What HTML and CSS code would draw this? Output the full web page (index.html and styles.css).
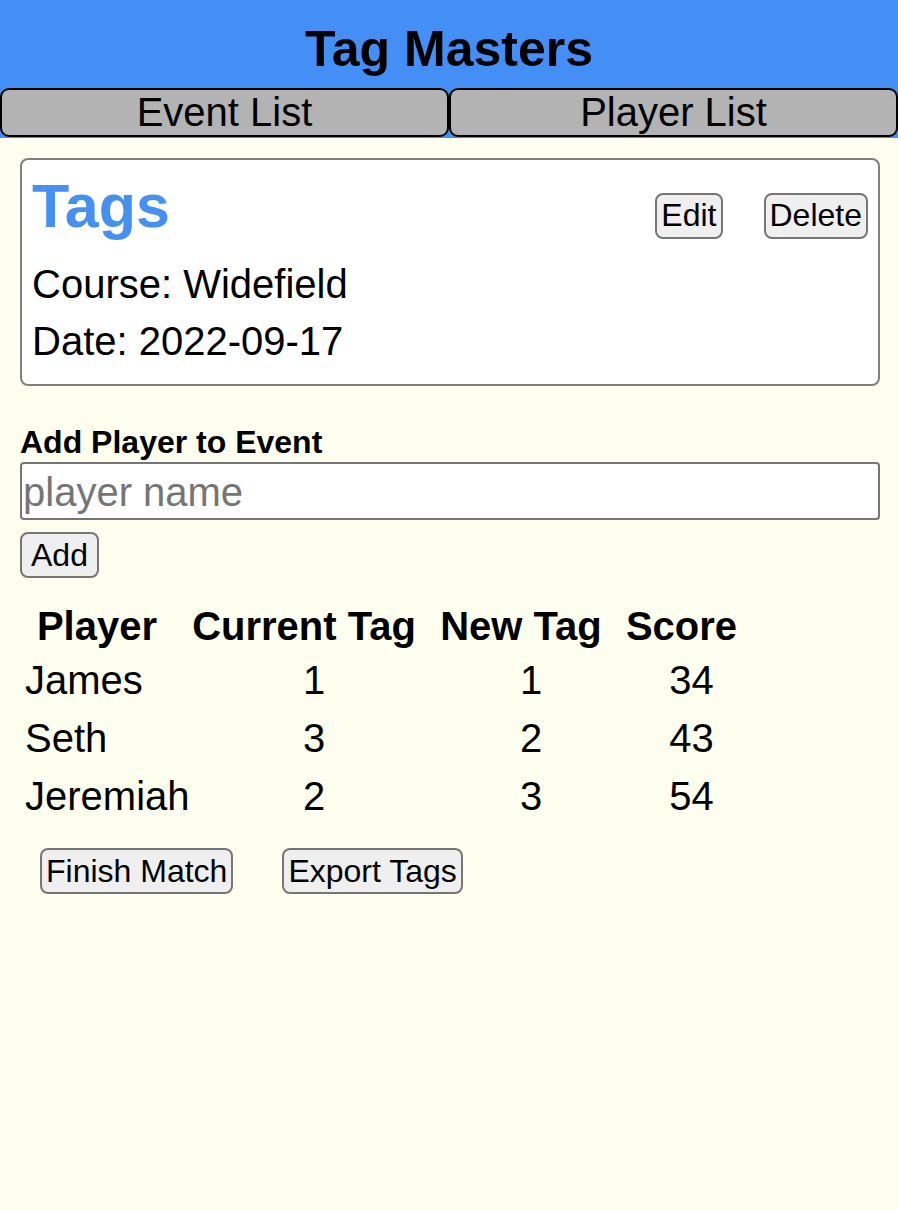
FILE: index.html
```html
<!DOCTYPE html>
<html lang="en">
<head>
<meta charset="utf-8">
<title>Tag Masters</title>
<link rel="stylesheet" href="styles.css">
</head>
<body>
<header class="app-header">
  <h1 class="app-title">Tag Masters</h1>
  <nav class="nav">
    <button class="nav-btn">Event List</button>
    <button class="nav-btn">Player List</button>
  </nav>
</header>

<main class="page">
  <section class="event-card">
    <div class="event-head">
      <h2 class="event-name">Tags</h2>
      <div class="event-actions">
        <button class="btn">Edit</button>
        <button class="btn">Delete</button>
      </div>
    </div>
    <div class="event-meta">
      <p>Course: Widefield</p>
      <p>Date: 2022-09-17</p>
    </div>
  </section>

  <section class="add-player">
    <label class="add-label" for="player">Add Player to Event</label>
    <input class="add-input" id="player" type="text" placeholder="player name">
    <button class="btn btn-add">Add</button>
  </section>

  <table class="scores">
    <colgroup>
      <col class="c1"><col class="c2"><col class="c3"><col class="c4">
    </colgroup>
    <thead>
      <tr><th>Player</th><th>Current Tag</th><th>New Tag</th><th>Score</th></tr>
    </thead>
    <tbody>
      <tr><td>James</td><td>1</td><td>1</td><td>34</td></tr>
      <tr><td>Seth</td><td>3</td><td>2</td><td>43</td></tr>
      <tr><td>Jeremiah</td><td>2</td><td>3</td><td>54</td></tr>
    </tbody>
  </table>

  <div class="match-actions">
    <button class="btn btn-low">Finish Match</button>
    <button class="btn btn-low">Export Tags</button>
  </div>
</main>
</body>
</html>
```

FILE: styles.css
```css
html, body {
  margin: 0;
  padding: 0;
  background: #fffff0;
  font-family: "Liberation Sans", Arial, sans-serif;
  color: #000;
}

.app-header {
  background: #448ff5;
  padding-bottom: 1px;
}

.app-title {
  margin: 0 0 11px;
  padding-top: 22px;
  font-size: 50px;
  line-height: 55px;
  font-weight: bold;
  text-align: center;
}

.nav {
  display: flex;
}

.nav-btn {
  flex: 1 1 0;
  height: 49px;
  margin: 0;
  padding: 0;
  border: 2px solid #000;
  border-radius: 9px;
  background: #b3b3b3;
  font-family: inherit;
  font-size: 40px;
  line-height: 45px;
  color: #000;
  text-align: center;
}

.page {
  padding: 0 0 40px;
}

.event-card {
  margin: 20px 18px 0 20px;
  padding: 12px 10px 14px 10px;
  background: #fff;
  border: 2px solid #808080;
  border-radius: 8px;
}

.event-head {
  display: flex;
  justify-content: space-between;
  align-items: flex-start;
}

.event-name {
  margin: 0;
  font-size: 61px;
  line-height: 69px;
  font-weight: bold;
  color: #4690f2;
}

.event-actions {
  display: flex;
  gap: 41px;
  margin-top: 21px;
}

.event-meta {
  margin-top: 15px;
}

.event-meta p {
  margin: 0;
  font-size: 40px;
  line-height: 57px;
}

.btn {
  margin: 0;
  padding: 1px 4px 3px;
  border: 2px solid #767676;
  border-radius: 8px;
  background: #efefef;
  font-family: inherit;
  font-size: 32px;
  line-height: 38px;
  color: #000;
}

.btn-low {
  padding-top: 2px;
  padding-bottom: 2px;
}

.add-player {
  margin: 38px 18px 0 20px;
}

.add-label {
  display: block;
  font-size: 32px;
  line-height: 37px;
  font-weight: bold;
}

.add-input {
  display: block;
  box-sizing: border-box;
  width: 100%;
  height: 58px;
  margin: 1px 0 0;
  padding: 3px 2px 0 1px;
  border: 2px solid #767676;
  border-radius: 4px;
  background: #fff;
  font-family: inherit;
  font-size: 40px;
  color: #000;
}

.add-input::placeholder {
  color: #757575;
}

.btn-add {
  margin-top: 12px;
  padding: 2px 9px;
}

.scores {
  margin: 23px 0 0 5px;
  border-collapse: collapse;
  border-spacing: 0;
  table-layout: fixed;
  width: 735px;
  font-size: 40px;
}

.scores .c1 { width: 184px; }
.scores .c2 { width: 230px; }
.scores .c3 { width: 204px; }
.scores .c4 { width: 117px; }

.scores th {
  padding: 0;
  line-height: 50px;
  font-weight: bold;
  text-align: center;
  white-space: nowrap;
}

.scores td {
  padding: 0 0 0 20px;
  line-height: 58px;
  text-align: center;
  white-space: nowrap;
}

.scores td:first-child {
  text-align: left;
}

.match-actions {
  display: flex;
  gap: 49px;
  margin-top: 23px;
  padding-left: 40px;
}
```
